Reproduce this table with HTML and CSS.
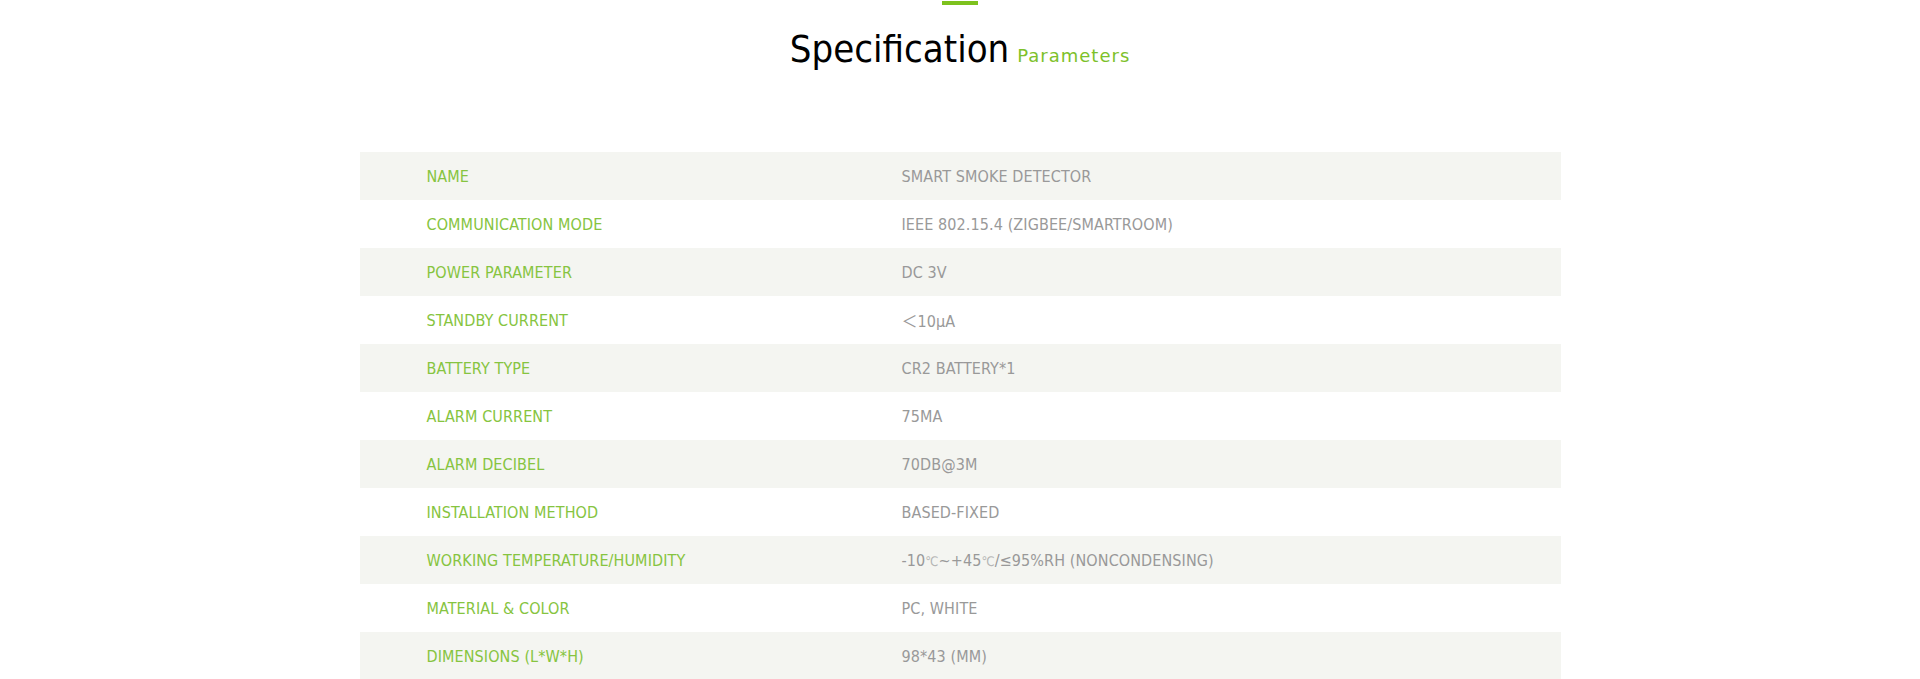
FILE: index.html
```html
<!DOCTYPE html>
<html lang="en">
<head>
<meta charset="utf-8">
<title>Specification Parameters</title>
<link rel="stylesheet" href="styles.css">
</head>
<body>
<section class="spec">
  <div class="spec-bar"></div>
  <h2 class="spec-title"><span class="spec-title-main">Specification</span><span class="spec-title-sub">Parameters</span></h2>
  <div class="spec-table">
    <div class="spec-row"><div class="spec-key">NAME</div><div class="spec-val">SMART SMOKE DETECTOR</div></div>
    <div class="spec-row"><div class="spec-key">COMMUNICATION MODE</div><div class="spec-val">IEEE 802.15.4 (ZIGBEE/SMARTROOM)</div></div>
    <div class="spec-row"><div class="spec-key">POWER PARAMETER</div><div class="spec-val">DC 3V</div></div>
    <div class="spec-row"><div class="spec-key">STANDBY CURRENT</div><div class="spec-val">＜10μA</div></div>
    <div class="spec-row"><div class="spec-key">BATTERY TYPE</div><div class="spec-val">CR2 BATTERY*1</div></div>
    <div class="spec-row"><div class="spec-key">ALARM CURRENT</div><div class="spec-val">75MA</div></div>
    <div class="spec-row"><div class="spec-key">ALARM DECIBEL</div><div class="spec-val">70DB@3M</div></div>
    <div class="spec-row"><div class="spec-key">INSTALLATION METHOD</div><div class="spec-val">BASED-FIXED</div></div>
    <div class="spec-row"><div class="spec-key">WORKING TEMPERATURE/HUMIDITY</div><div class="spec-val">-10<span class="deg">℃</span>~+45<span class="deg">℃</span>/≤95%RH (NONCONDENSING)</div></div>
    <div class="spec-row"><div class="spec-key">MATERIAL &amp; COLOR</div><div class="spec-val">PC, WHITE</div></div>
    <div class="spec-row"><div class="spec-key">DIMENSIONS (L*W*H)</div><div class="spec-val">98*43 (MM)</div></div>
  </div>
</section>
</body>
</html>
```
FILE: styles.css
```css
html, body {
  margin: 0;
  padding: 0;
  background: #ffffff;
}

body {
  font-family: "DejaVu Sans Condensed", "DejaVu Sans", "Noto Sans CJK SC", sans-serif;
  font-stretch: condensed;
}

.spec {
  display: flex;
  flex-direction: column;
  align-items: center;
  padding-top: 1px;
}

.spec-bar {
  width: 36px;
  height: 4px;
  background: #7dc21e;
}

.spec-title {
  margin: 16px 0 0;
  font-weight: normal;
  line-height: 56px;
  height: 56px;
  white-space: nowrap;
}

.spec-title-main {
  font-size: 38px;
  color: #000000;
}

.spec-title-sub {
  margin-left: 8px;
  font-family: "DejaVu Sans", sans-serif;
  font-stretch: normal;
  font-size: 18px;
  letter-spacing: 1px;
  color: #7dc12a;
}

.spec-table {
  width: 1201px;
  margin-top: 75px;
  display: flex;
  flex-direction: column;
}

.spec-row {
  display: grid;
  grid-template-columns: 476px 1fr;
  height: 48px;
  align-items: center;
  font-size: 16px;
  letter-spacing: 0.1px;
}

.spec-row:nth-child(odd) {
  background: #f4f5f1;
}

.spec-key {
  padding-left: 67px;
  color: #86c440;
}

.spec-val {
  padding-left: 66px;
  color: #999999;
}

.deg {
  font-size: 13px;
  color: #b5b5b5;
}
```
